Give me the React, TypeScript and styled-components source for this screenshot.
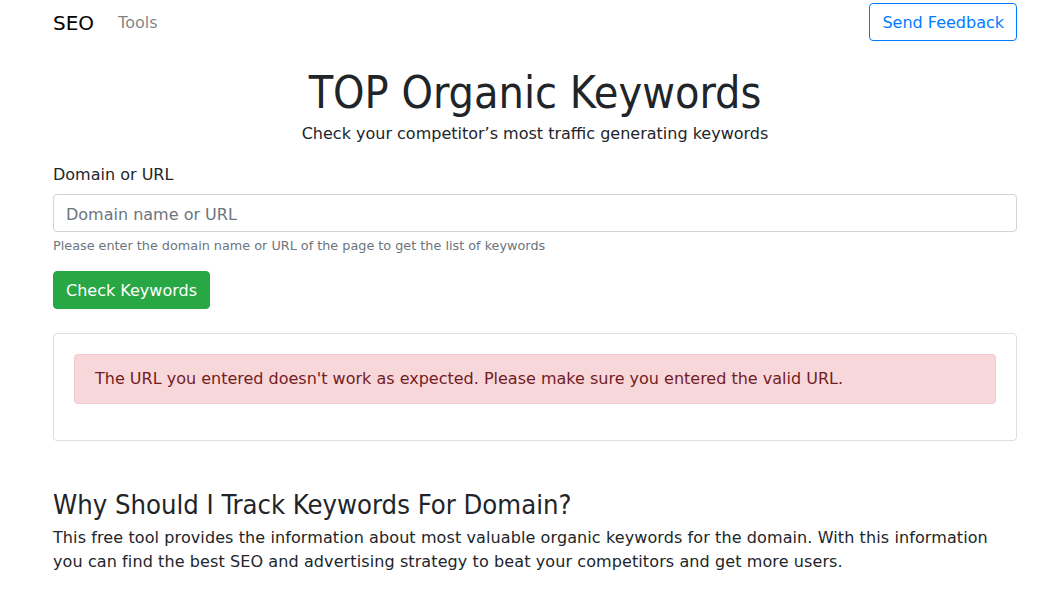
import React from "react";
import styled, { createGlobalStyle } from "styled-components";

const GlobalStyle = createGlobalStyle`
  html, body { margin: 0; padding: 0; background: #fff; }
  body {
    font-family: "DejaVu Sans", Verdana, sans-serif;
    color: #212529;
    font-size: 16px;
    line-height: 1.5;
  }
  * { box-sizing: border-box; }
`;

const Page = styled.div`
  padding: 0 26px 40px 53px;
`;

const Navbar = styled.nav`
  display: flex;
  align-items: center;
  justify-content: space-between;
  padding: 3px 0;
`;

const NavLeft = styled.div`
  display: flex;
  align-items: center;
  gap: 24px;
  padding-top: 2px;
`;

const Brand = styled.a`
  font-size: 20px;
  line-height: 30px;
  color: #000;
  text-decoration: none;
`;

const NavLink = styled.a`
  font-size: 16px;
  color: rgba(0, 0, 0, 0.5);
  text-decoration: none;
`;

const Button = styled.button<{ $variant: "outline" | "success" }>`
  font-family: inherit;
  font-size: 16px;
  line-height: 24px;
  height: 38px;
  padding: 7px 12px 5px;
  border-radius: 4px;
  cursor: pointer;
  border: 1px solid ${(p) => (p.$variant === "outline" ? "#007bff" : "#28a745")};
  background: ${(p) => (p.$variant === "outline" ? "#fff" : "#28a745")};
  color: ${(p) => (p.$variant === "outline" ? "#007bff" : "#fff")};
`;

const Hero = styled.header`
  text-align: center;
  margin-top: 22px;
`;

const Title = styled.h1`
  font-size: 44.5px;
  font-stretch: semi-condensed;
  font-weight: 400;
  line-height: 1.2;
  margin: 0;
`;

const Lead = styled.p`
  margin: 3px 0 0;
`;

const FormGroup = styled.div`
  margin-top: 17px;
  display: flex;
  flex-direction: column;
`;

const Label = styled.label`
  margin-bottom: 7px;
`;

const Input = styled.input`
  height: 38px;
  width: 100%;
  padding: 7px 12px 5px;
  font-family: inherit;
  font-size: 16px;
  border: 1px solid #ced4da;
  border-radius: 4px;
  color: #495057;
  &::placeholder { color: #6c757d; }
`;

const Help = styled.small`
  margin-top: 4px;
  font-size: 12.8px;
  line-height: 1.5;
  color: #6c757d;
`;

const ButtonRow = styled.div`
  margin-top: 15px;
`;

const Card = styled.div`
  margin-top: 24px;
  border: 1px solid rgba(0, 0, 0, 0.125);
  border-radius: 4px;
  padding: 20px;
`;

const Alert = styled.div`
  background: #f8d7da;
  border: 1px solid #f5c6cb;
  color: #721c24;
  border-radius: 4px;
  padding: 12px 20px;
  margin-bottom: 16px;
`;

const Section = styled.section`
  margin-top: 48px;
`;

const SectionTitle = styled.h3`
  font-size: 27.2px;
  font-stretch: semi-condensed;
  font-weight: 400;
  line-height: 1.2;
  margin: 0 0 5px;
`;

const Paragraph = styled.p`
  margin: 0;
  letter-spacing: 0.1px;
`;

export default function App() {
  return (
    <>
      <GlobalStyle />
      <Page>
        <Navbar>
          <NavLeft>
            <Brand href="#">SEO</Brand>
            <NavLink href="#">Tools</NavLink>
          </NavLeft>
          <Button $variant="outline">Send Feedback</Button>
        </Navbar>
        <Hero>
          <Title>TOP Organic Keywords</Title>
          <Lead>Check your competitor’s most traffic generating keywords</Lead>
        </Hero>
        <FormGroup>
          <Label htmlFor="domain">Domain or URL</Label>
          <Input id="domain" placeholder="Domain name or URL" />
          <Help>Please enter the domain name or URL of the page to get the list of keywords</Help>
        </FormGroup>
        <ButtonRow>
          <Button $variant="success">Check Keywords</Button>
        </ButtonRow>
        <Card>
          <Alert>
            The URL you entered doesn't work as expected. Please make sure you entered the valid URL.
          </Alert>
        </Card>
        <Section>
          <SectionTitle>Why Should I Track Keywords For Domain?</SectionTitle>
          <Paragraph>
            This free tool provides the information about most valuable organic keywords for the domain. With this information you can find the best SEO and advertising strategy to beat your competitors and get more users.
          </Paragraph>
        </Section>
      </Page>
    </>
  );
}
